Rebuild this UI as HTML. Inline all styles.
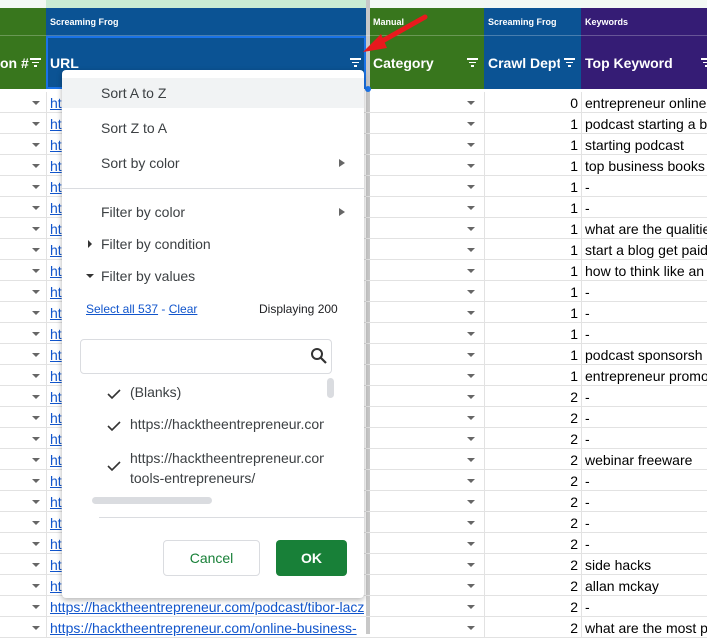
<!DOCTYPE html><html><head><style>
*{margin:0;padding:0;box-sizing:border-box}
body{width:707px;height:634px;overflow:hidden;background:#fff;font-family:"Liberation Sans",Arial,sans-serif;position:relative}
.a{position:absolute}
.h{color:#fff;font-weight:bold}
.sm{font-size:9px;font-weight:bold;color:#fff}
.hl{font-size:14px}
.row{position:absolute;left:0;width:707px;height:21px;border-bottom:1px solid #e2e2e2;font-size:14px}
.row span{position:absolute;top:3px}
.dd{position:absolute;width:0;height:0;border-left:4px solid transparent;border-right:4px solid transparent;border-top:4px solid #666}
.fi{position:absolute;width:11px}
.fi i{display:block;height:1.5px;background:#fff;margin:0 auto 2px}
.m{position:absolute;font-size:14px;color:#3c4043}
</style></head><body>
<div class="a" style="left:0;top:0;width:707px;height:8px;background:#f2f8f4"></div>
<div class="a" style="left:46px;top:0;width:320px;height:8px;background:#c9ecd4"></div>
<div class="a" style="left:0;top:8px;width:46px;height:81px;background:#38761d"></div>
<div class="a" style="left:46px;top:8px;width:320px;height:81px;background:#0b5394"></div>
<div class="a" style="left:46px;top:36px;width:320px;height:53px;border:2px solid #1a73e8"></div>
<div class="a" style="left:366px;top:0;width:4px;height:634px;background:#c8c8c8"></div>
<div class="a" style="left:370px;top:8px;width:114px;height:81px;background:#38761d"></div>
<div class="a" style="left:484px;top:8px;width:97px;height:81px;background:#0b5394"></div>
<div class="a" style="left:581px;top:8px;width:126px;height:81px;background:#351c75"></div>
<div class="a" style="left:0;top:35px;width:707px;height:1px;background:rgba(255,255,255,.25)"></div>
<div class="a sm" style="left:50px;top:17px">Screaming Frog</div>
<div class="a sm" style="left:373px;top:17px">Manual</div>
<div class="a sm" style="left:488px;top:17px">Screaming Frog</div>
<div class="a sm" style="left:585px;top:17px">Keywords</div>
<div class="a h hl" style="left:0;top:55px">on #</div>
<div class="a h hl" style="left:50px;top:55px">URL</div>
<div class="a h hl" style="left:373px;top:55px">Category</div>
<div class="a h hl" style="left:488px;top:55px;width:72px;overflow:hidden;white-space:nowrap">Crawl Depth</div>
<div class="a h hl" style="left:585px;top:55px">Top Keyword</div>
<div class="fi" style="left:30px;top:58px"><i style="width:11px"></i><i style="width:7px"></i><i style="width:3px"></i></div>
<div class="fi" style="left:350px;top:58px"><i style="width:11px"></i><i style="width:7px"></i><i style="width:3px"></i></div>
<div class="fi" style="left:467px;top:58px"><i style="width:11px"></i><i style="width:7px"></i><i style="width:3px"></i></div>
<div class="fi" style="left:564px;top:58px"><i style="width:11px"></i><i style="width:7px"></i><i style="width:3px"></i></div>
<div class="fi" style="left:701px;top:58px"><i style="width:11px"></i><i style="width:7px"></i><i style="width:3px"></i></div>
<svg class="a" style="left:355px;top:12px" width="80" height="45"><line x1="70" y1="5" x2="22" y2="32" stroke="#e8191d" stroke-width="5" stroke-linecap="round"/><polygon points="8,40 26,22 32,36" fill="#e8191d"/></svg>
<div class="a" style="left:365px;top:86px;width:6px;height:6px;border-radius:50%;background:#1a73e8"></div>
<div id="rows"></div>
<script>
var c=[0,1,1,1,1,1,1,1,1,1,1,1,1,1,2,2,2,2,2,2,2,2,2,2,2,2];
var k=["entrepreneur online","podcast starting a b","starting podcast","top business books","-","-","what are the qualitie","start a blog get paid","how to think like an","-","-","-","podcast sponsorsh","entrepreneur promo","-","-","-","webinar freeware","-","-","-","-","side hacks","allan mckay","-","what are the most p"];
var h="";
for(var i=0;i<26;i++){var t=92+i*21;var u=i==24?"https://hacktheentrepreneur.com/podcast/tibor-lacz":i==25?"https://hacktheentrepreneur.com/online-business-":"ht";
h+='<div class="row" style="top:'+t+'px"><div class="dd" style="left:32px;top:9px"></div><div class="dd" style="left:467px;top:9px"></div><span style="left:50px;color:#1155cc;text-decoration:underline;white-space:nowrap;width:314px;overflow:hidden">'+u+'</span><span style="left:484px;width:94px;text-align:right">'+c[i]+'</span><span style="left:585px;white-space:nowrap">'+k[i]+'</span>'+
'<div class="a" style="left:46px;top:0;width:1px;height:21px;background:#e2e2e2"></div><div class="a" style="left:484px;top:0;width:1px;height:21px;background:#e2e2e2"></div><div class="a" style="left:581px;top:0;width:1px;height:21px;background:#e2e2e2"></div></div>';}
document.getElementById("rows").innerHTML=h;
</script>
<div class="a" style="left:62px;top:70px;width:302px;height:528px;background:#fff;border-radius:4px;box-shadow:0 2px 6px rgba(0,0,0,.3)">
<div class="a" style="left:0;top:8px;width:302px;height:30px;background:#f1f3f4"></div>
<div class="m" style="left:39px;top:15px">Sort A to Z</div>
<div class="m" style="left:39px;top:50px">Sort Z to A</div>
<div class="m" style="left:39px;top:85px">Sort by color</div>
<div class="a" style="left:277px;top:89px;border-left:6px solid #666;border-top:4px solid transparent;border-bottom:4px solid transparent"></div>
<div class="a" style="left:0;top:118px;width:302px;height:1px;background:#dadce0"></div>
<div class="m" style="left:39px;top:134px">Filter by color</div>
<div class="a" style="left:277px;top:138px;border-left:6px solid #666;border-top:4px solid transparent;border-bottom:4px solid transparent"></div>
<div class="a" style="left:26px;top:170px;border-left:4px solid #333;border-top:4px solid transparent;border-bottom:4px solid transparent"></div>
<div class="m" style="left:39px;top:166px">Filter by condition</div>
<div class="a" style="left:24px;top:204px;border-top:4px solid #333;border-left:4px solid transparent;border-right:4px solid transparent"></div>
<div class="m" style="left:39px;top:198px">Filter by values</div>
<div class="a" style="left:24px;top:232px;font-size:12px;color:#1155cc"><u>Select all 537</u> - <u>Clear</u></div>
<div class="a" style="left:197px;top:232px;font-size:12px;color:#202124">Displaying 200</div>
<div class="a" style="left:18px;top:269px;width:252px;height:35px;border:1px solid #dadce0;border-radius:4px"></div>
<svg class="a" style="left:248px;top:277px" width="18" height="18"><circle cx="7" cy="7" r="5" fill="none" stroke="#333" stroke-width="2"/><line x1="11" y1="11" x2="16" y2="16" stroke="#333" stroke-width="2.2"/></svg>
<div class="a" style="left:265px;top:308px;width:7px;height:20px;border-radius:4px;background:#dadce0"></div>
<svg class="a" style="left:44px;top:316px" width="16" height="160" fill="none" stroke="#333" stroke-width="1.6"><path d="M2 8l4 4 8-8"/><path d="M2 40l4 4 8-8"/><path d="M2 80l4 4 8-8"/></svg>
<div class="m" style="left:68px;top:314px">(Blanks)</div>
<div class="m" style="left:68px;top:346px;width:194px;overflow:hidden;white-space:nowrap">https://hacktheentrepreneur.com/</div>
<div class="m" style="left:68px;top:378px;width:194px;overflow:hidden;white-space:nowrap;line-height:20px">https://hacktheentrepreneur.com/<br>tools-entrepreneurs/</div>
<div class="a" style="left:30px;top:427px;width:120px;height:7px;border-radius:4px;background:#dadce0"></div>
<div class="a" style="left:37px;top:447px;width:265px;height:1px;background:#dadce0"></div>
<div class="a" style="left:101px;top:470px;width:97px;height:36px;border:1px solid #dadce0;border-radius:4px;color:#188038;font-size:14px;text-align:center;line-height:34px">Cancel</div>
<div class="a" style="left:214px;top:470px;width:71px;height:36px;background:#188038;border-radius:4px;color:#fff;font-weight:bold;font-size:14px;text-align:center;line-height:36px">OK</div>
</div>
</body></html>
